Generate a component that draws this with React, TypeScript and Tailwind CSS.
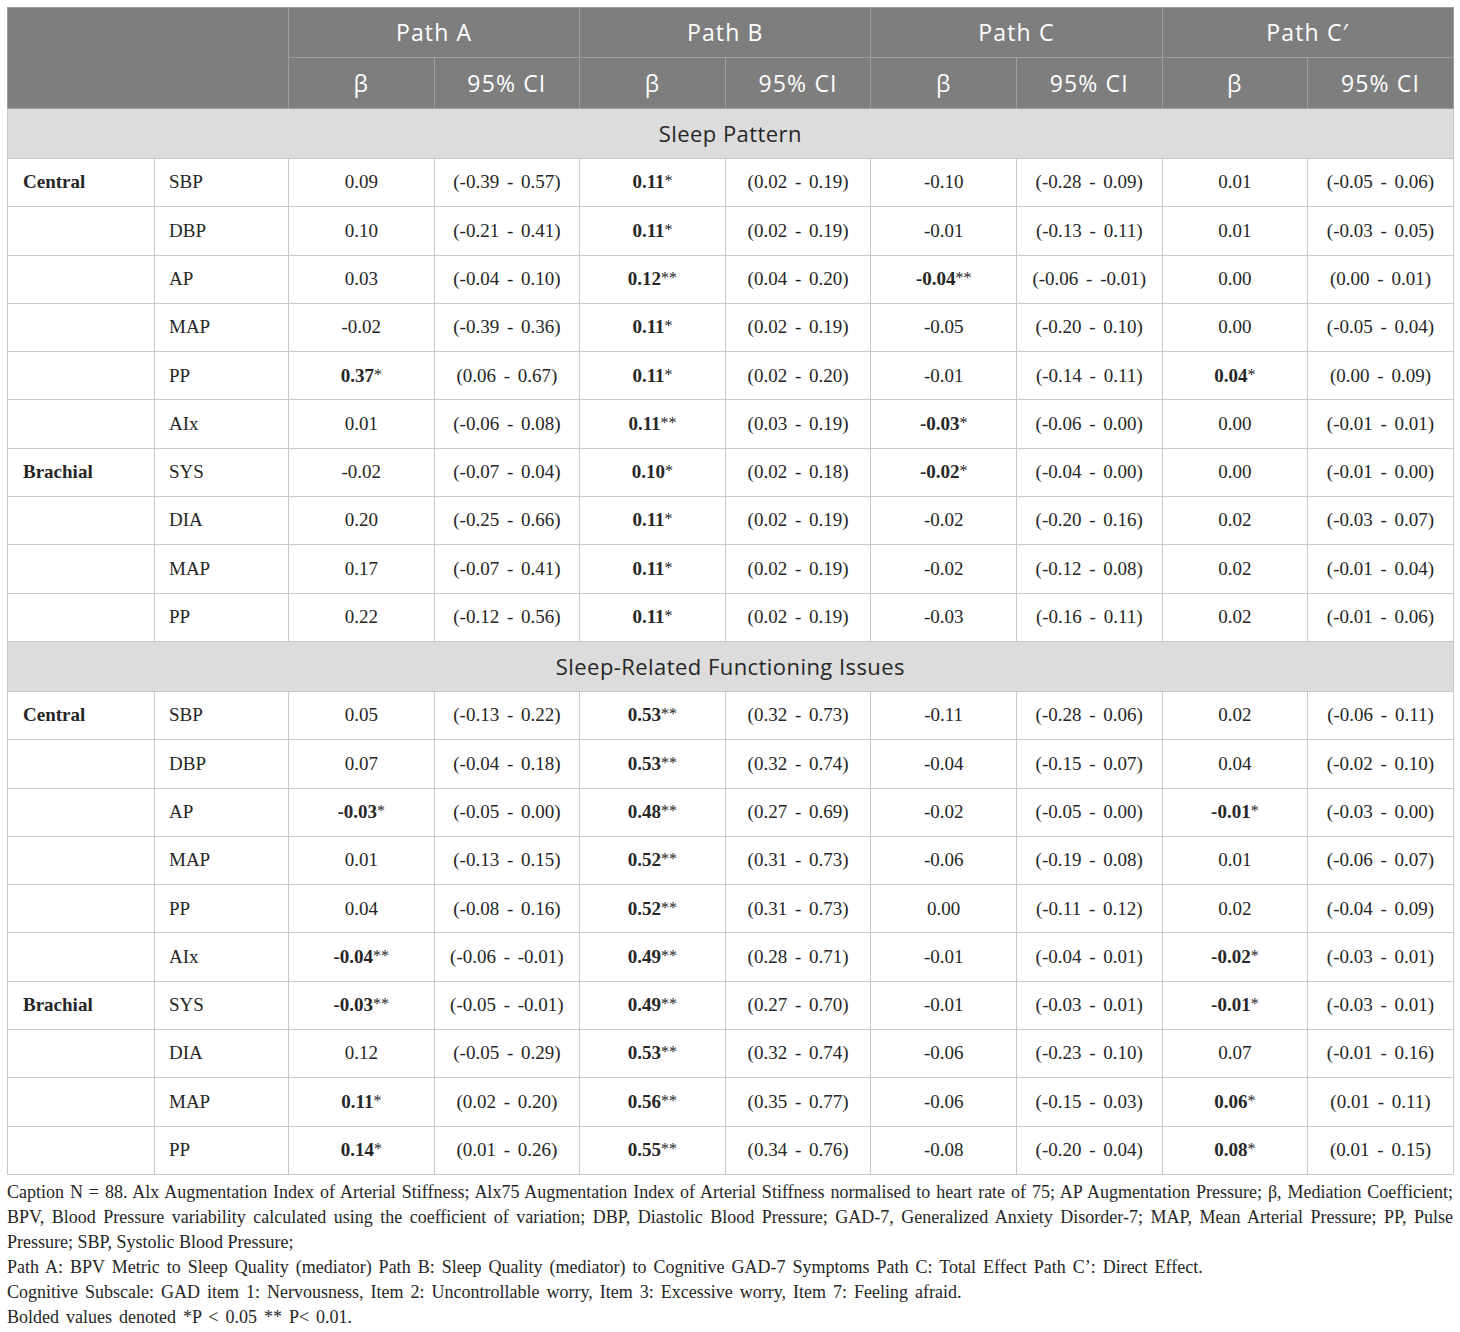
import React from 'react';

// data
type Row = { group?: string; metric: string; vals: string[] };

const sleepPattern: Row[] = [
  { group: 'Central', metric: 'SBP', vals: ['0.09', '(-0.39 - 0.57)', '0.11*', '(0.02 - 0.19)', '-0.10', '(-0.28 - 0.09)', '0.01', '(-0.05 - 0.06)'] },
  { metric: 'DBP', vals: ['0.10', '(-0.21 - 0.41)', '0.11*', '(0.02 - 0.19)', '-0.01', '(-0.13 - 0.11)', '0.01', '(-0.03 - 0.05)'] },
  { metric: 'AP', vals: ['0.03', '(-0.04 - 0.10)', '0.12**', '(0.04 - 0.20)', '-0.04**', '(-0.06 - -0.01)', '0.00', '(0.00 - 0.01)'] },
  { metric: 'MAP', vals: ['-0.02', '(-0.39 - 0.36)', '0.11*', '(0.02 - 0.19)', '-0.05', '(-0.20 - 0.10)', '0.00', '(-0.05 - 0.04)'] },
  { metric: 'PP', vals: ['0.37*', '(0.06 - 0.67)', '0.11*', '(0.02 - 0.20)', '-0.01', '(-0.14 - 0.11)', '0.04*', '(0.00 - 0.09)'] },
  { metric: 'AIx', vals: ['0.01', '(-0.06 - 0.08)', '0.11**', '(0.03 - 0.19)', '-0.03*', '(-0.06 - 0.00)', '0.00', '(-0.01 - 0.01)'] },
  { group: 'Brachial', metric: 'SYS', vals: ['-0.02', '(-0.07 - 0.04)', '0.10*', '(0.02 - 0.18)', '-0.02*', '(-0.04 - 0.00)', '0.00', '(-0.01 - 0.00)'] },
  { metric: 'DIA', vals: ['0.20', '(-0.25 - 0.66)', '0.11*', '(0.02 - 0.19)', '-0.02', '(-0.20 - 0.16)', '0.02', '(-0.03 - 0.07)'] },
  { metric: 'MAP', vals: ['0.17', '(-0.07 - 0.41)', '0.11*', '(0.02 - 0.19)', '-0.02', '(-0.12 - 0.08)', '0.02', '(-0.01 - 0.04)'] },
  { metric: 'PP', vals: ['0.22', '(-0.12 - 0.56)', '0.11*', '(0.02 - 0.19)', '-0.03', '(-0.16 - 0.11)', '0.02', '(-0.01 - 0.06)'] },
];

const sleepIssues: Row[] = [
  { group: 'Central', metric: 'SBP', vals: ['0.05', '(-0.13 - 0.22)', '0.53**', '(0.32 - 0.73)', '-0.11', '(-0.28 - 0.06)', '0.02', '(-0.06 - 0.11)'] },
  { metric: 'DBP', vals: ['0.07', '(-0.04 - 0.18)', '0.53**', '(0.32 - 0.74)', '-0.04', '(-0.15 - 0.07)', '0.04', '(-0.02 - 0.10)'] },
  { metric: 'AP', vals: ['-0.03*', '(-0.05 - 0.00)', '0.48**', '(0.27 - 0.69)', '-0.02', '(-0.05 - 0.00)', '-0.01*', '(-0.03 - 0.00)'] },
  { metric: 'MAP', vals: ['0.01', '(-0.13 - 0.15)', '0.52**', '(0.31 - 0.73)', '-0.06', '(-0.19 - 0.08)', '0.01', '(-0.06 - 0.07)'] },
  { metric: 'PP', vals: ['0.04', '(-0.08 - 0.16)', '0.52**', '(0.31 - 0.73)', '0.00', '(-0.11 - 0.12)', '0.02', '(-0.04 - 0.09)'] },
  { metric: 'AIx', vals: ['-0.04**', '(-0.06 - -0.01)', '0.49**', '(0.28 - 0.71)', '-0.01', '(-0.04 - 0.01)', '-0.02*', '(-0.03 - 0.01)'] },
  { group: 'Brachial', metric: 'SYS', vals: ['-0.03**', '(-0.05 - -0.01)', '0.49**', '(0.27 - 0.70)', '-0.01', '(-0.03 - 0.01)', '-0.01*', '(-0.03 - 0.01)'] },
  { metric: 'DIA', vals: ['0.12', '(-0.05 - 0.29)', '0.53**', '(0.32 - 0.74)', '-0.06', '(-0.23 - 0.10)', '0.07', '(-0.01 - 0.16)'] },
  { metric: 'MAP', vals: ['0.11*', '(0.02 - 0.20)', '0.56**', '(0.35 - 0.77)', '-0.06', '(-0.15 - 0.03)', '0.06*', '(0.01 - 0.11)'] },
  { metric: 'PP', vals: ['0.14*', '(0.01 - 0.26)', '0.55**', '(0.34 - 0.76)', '-0.08', '(-0.20 - 0.04)', '0.08*', '(0.01 - 0.15)'] },
];

const paths = ['Path A', 'Path B', 'Path C', 'Path C′'];

const serif = "font-['Liberation_Serif',_'Times_New_Roman',_serif]";
const sans = "font-['Open_Sans',_'Noto_Sans',_sans-serif]";

// markup
const Value = ({ v }: { v: string }) => {
  const i = v.indexOf('*');
  if (i < 0) return <>{v}</>;
  return (
    <>
      <b className="font-bold">{v.slice(0, i)}</b>
      <span className="text-[16px] align-[2px]">{v.slice(i)}</span>
    </>
  );
};

const Section = ({ title, rows }: { title: string; rows: Row[] }) => (
  <>
    <tr className="h-[50px] bg-[#dcdcdc]">
      <td colSpan={10} className={`${sans} border border-[#c9c9c9] text-center text-[22px] text-[#262626] tracking-[0.02em]`}>
        {title}
      </td>
    </tr>
    {rows.map((r, i) => (
      <tr key={i} className="h-[48.3px]">
        <td className="border border-[#c9c9c9] pl-[15px] font-bold">{r.group ?? ''}</td>
        <td className="border border-[#c9c9c9] pl-[14px]">{r.metric}</td>
        {r.vals.map((v, j) => (
          <td key={j} className="border border-[#c9c9c9] text-center whitespace-nowrap [word-spacing:3px]">
            <Value v={v} />
          </td>
        ))}
      </tr>
    ))}
  </>
);

const App = () => (
  <main className={`${serif} bg-white px-[7px] pt-[7px] pb-[10px] text-[#262626]`}>
    <table className="w-[1446px] table-fixed border-collapse text-[19px]">
      <colgroup>
        <col className="w-[147px]" />
        <col className="w-[134px]" />
        {Array.from({ length: 8 }).map((_, i) => (
          <col key={i} className="w-[145.6px]" />
        ))}
      </colgroup>
      <thead className={`${sans} bg-[#7d7e7d] text-white text-[23px] tracking-[0.05em]`}>
        <tr className="h-[50px]">
          <th colSpan={2} rowSpan={2} className="border border-[#9c9d9c]" />
          {paths.map((p) => (
            <th key={p} colSpan={2} className="border border-[#9c9d9c] font-normal">
              {p}
            </th>
          ))}
        </tr>
        <tr className="h-[51px]">
          {paths.map((p) => (
            <React.Fragment key={p}>
              <th className="border border-[#9c9d9c] font-normal">β</th>
              <th className="border border-[#9c9d9c] font-normal">95% CI</th>
            </React.Fragment>
          ))}
        </tr>
      </thead>
      <tbody>
        <Section title="Sleep Pattern" rows={sleepPattern} />
        <Section title="Sleep-Related Functioning Issues" rows={sleepIssues} />
      </tbody>
    </table>
    <div className="mt-[5px] w-[1446px] text-[18px] leading-[25px] text-[#262626]">
      <p className="text-justify">
        Caption N = 88. Alx Augmentation Index of Arterial Stiffness; Alx75 Augmentation Index of Arterial Stiffness
        normalised to heart rate of 75; AP Augmentation Pressure; β, Mediation Coefficient; BPV, Blood Pressure variability
        calculated using the coefficient of variation; DBP, Diastolic Blood Pressure; GAD-7, Generalized Anxiety Disorder-7;
        MAP, Mean Arterial Pressure; PP, Pulse Pressure; SBP, Systolic Blood Pressure;
      </p>
      <p className="[word-spacing:2.5px]">
        Path A: BPV Metric to Sleep Quality (mediator) Path B: Sleep Quality (mediator) to Cognitive GAD-7 Symptoms Path C:
        Total Effect Path C’: Direct Effect.
      </p>
      <p className="[word-spacing:2.5px]">
        Cognitive Subscale: GAD item 1: Nervousness, Item 2: Uncontrollable worry, Item 3: Excessive worry, Item 7: Feeling
        afraid.
      </p>
      <p className="[word-spacing:2.5px]">Bolded values denoted *P &lt; 0.05 ** P&lt; 0.01.</p>
    </div>
  </main>
);

export default App;
